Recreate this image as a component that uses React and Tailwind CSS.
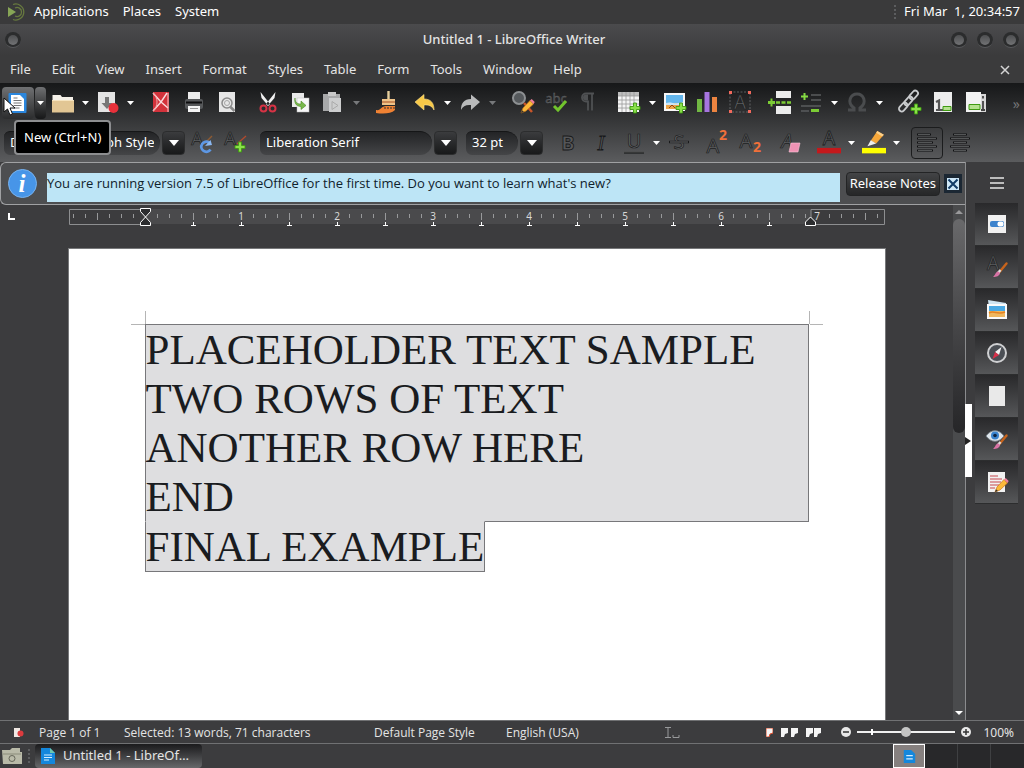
import { useState } from "react";

const lines = [
  "PLACEHOLDER TEXT SAMPLE",
  "TWO ROWS OF TEXT",
  "ANOTHER ROW HERE",
  "END",
];
const lastLine = "FINAL EXAMPLE";

const Svg = ({ size = 22, children }) => (
  <svg width={size} height={size} viewBox="0 0 22 22" fill="none" className="flex-none overflow-visible" aria-hidden="true">
    {children}
  </svg>
);

const Plus = ({ x = 12, y = 12 }) => (
  <path
    d={`M${x + 3.5} ${y}h3v3.5h3.5v3h-3.5v3.5h-3v-3.5h-3.5v-3h3.5z`}
    fill="#8be04a"
    stroke="#3f9a12"
    strokeWidth="0.9"
  />
);

const Letter = ({ x = 11, y = 18, size = 20, italic, children }) => (
  <text
    x={x}
    y={y}
    textAnchor="middle"
    fontFamily="Noto Sans"
    fontSize={size}
    fontStyle={italic ? "italic" : "normal"}
    fill="#626466"
    stroke="#1c1d1e"
    strokeWidth="0.7"
  >
    {children}
  </text>
);

const Pencil = () => (
  <>
    <path d="M9 21l2-5 7-7.500 3.500 3.500-7.500 7z" fill="#fbb93a" stroke="#c9741a" strokeWidth="0.7" />
    <path d="M18 8.500l1.700-1.500 3 3-1.200 2z" fill="#ef7f9c" />
    <path d="M9 21l1-2.800 2 1.800z" fill="#333" />
  </>
);

const Brush = () => (
  <>
    <path d="M20.500 7.500l-7 8.500" stroke="#c8641c" strokeWidth="2.400" strokeLinecap="round" />
    <path d="M14.500 14l-2.500 3" stroke="#ddd" strokeWidth="2.600" />
    <path d="M12.500 15.500c-3 0-3 3.500-5.500 5.500 3.500 0 6.500-1 7-4z" fill="#d873a5" />
  </>
);

const icons = {
  doc: (
    <Svg>
      <rect x="1.500" y="1" width="18" height="20" rx="1" fill="#2b86dc" />
      <path d="M4 3h9l4 4v12h-13z" fill="#fff" />
      <path d="M6.500 6h4M6.500 8.500h8M6.500 11h8M6.500 13.500h8M6.500 16h6" stroke="#777" />
    </Svg>
  ),
  folder: (
    <Svg>
      <path d="M0.500 3h8l1.500 2h11v15h-20.500z" fill="#f5f1e9" />
      <path d="M0 8h22v12.500h-22z" fill="#e2c694" />
      <path d="M0 8.500h22" stroke="#f6e4bf" />
    </Svg>
  ),
  save: (
    <Svg>
      <path d="M1 0h17v20h-17z" fill="#e4e4e4" />
      <path d="M8 5h4v6h3.500l-5.500 6-5.500-6h3.500z" fill="#777" />
      <circle cx="16.500" cy="16" r="5" fill="#e8303a" />
    </Svg>
  ),
  pdf: (
    <Svg>
      <rect x="3" y="0" width="16" height="20" fill="#d3323b" />
      <path d="M3 1l8 9-8 9M11 10l6-9M11 10l7 6" stroke="#f9dcdd" strokeWidth="1.400" />
      <path d="M3 1c3 3 4 6 4 9s-1 6-4 9" stroke="#f0a3a6" />
      <path d="M18 1v19" stroke="#f4c7c9" />
    </Svg>
  ),
  print: (
    <Svg>
      <path d="M5 0h12v9h-12z" fill="#ececec" />
      <rect x="2" y="7" width="18" height="10" rx="2" fill="#56585a" />
      <path d="M3 10.500h16" stroke="#0d0d0e" strokeWidth="2" />
      <path d="M5 14h12v6h-12z" fill="#f4f4f4" />
      <path d="M7 16.500h8" stroke="#999" />
    </Svg>
  ),
  preview: (
    <Svg>
      <path d="M3 0h16v20h-16z" fill="#e6e6e6" />
      <circle cx="11" cy="11" r="5" stroke="#8b8b8b" strokeWidth="1.500" />
      <circle cx="11" cy="11" r="2.500" stroke="#a5a5a5" />
      <path d="M14.500 15l4 4" stroke="#888" strokeWidth="2.500" />
    </Svg>
  ),
  cut: (
    <Svg>
      <path d="M3.500 0l1 6 7 8 1.500-2zM18.500 0l-1 6-7 8-1.500-2z" fill="#f0f0f0" />
      <ellipse cx="6.500" cy="16.500" rx="3" ry="3" stroke="#d63345" strokeWidth="2" />
      <ellipse cx="15.500" cy="16.500" rx="3" ry="3" stroke="#d63345" strokeWidth="2" />
    </Svg>
  ),
  copy: (
    <Svg>
      <rect x="2" y="1" width="12" height="14" fill="#e9e9e9" />
      <rect x="7" y="6" width="12" height="14" fill="#f7f7f7" stroke="#bbb" strokeWidth="0.500" />
      <path d="M5 6c0 4 2 6 6 6v-3l5 4.500-5 4v-3c-5 0-7-4-6-8.500z" fill="#78b84a" stroke="#4b8a24" strokeWidth="0.600" />
    </Svg>
  ),
  paste: (
    <Svg>
      <path d="M0 2h17v17h-17z" fill="#a8a9aa" />
      <rect x="5" y="0" width="8" height="4" fill="#c9c9c9" />
      <path d="M6 6h12v14h-12z" fill="#cdcecf" />
      <path d="M9 9.500l6 4-6 4z" stroke="#aaa" />
    </Svg>
  ),
  clone: (
    <Svg>
      <path d="M12.500 -1v8" stroke="#e7cf9d" strokeWidth="2.400" />
      <path d="M6 7h13v6h-13z" fill="#f0c489" />
      <path d="M6 10h13" stroke="#a94f20" />
      <path d="M0 18c5 1 5-4 10-4h9v4c-4 4-12 4-19 3z" fill="#f08233" />
      <path d="M9 15v2M12 15v2M15 15v2M18 15v2" stroke="#333" />
    </Svg>
  ),
  undo: (
    <Svg>
      <path d="M1 10l9-7.500v4.500c7 0 10 4 10 11-2-4-5-5.500-10-5v5z" fill="#f8c948" stroke="#fbe08b" strokeWidth="0.600" />
    </Svg>
  ),
  redo: (
    <Svg>
      <path d="M21 10l-9-7.500v4.500c-7 0-10 4-10 11 2-4 5-5.500 10-5v5z" fill="#b9babb" />
    </Svg>
  ),
  find: (
    <Svg>
      <circle cx="7" cy="6" r="6" fill="#55595c" stroke="#8d9092" strokeWidth="2" />
      <path d="M12 11l8 9" stroke="#c9562a" strokeWidth="2.500" />
      <Pencil />
    </Svg>
  ),
  spell: (
    <Svg>
      <text x="11" y="11" textAnchor="middle" fontFamily="Noto Sans" fontSize="13" fill="#46484a" stroke="#6b6d6f" strokeWidth="0.300">abc</text>
      <path d="M9 14l4 4 8-9" stroke="#72c42d" strokeWidth="3" />
    </Svg>
  ),
  pilcrow: (
    <Svg>
      <path d="M16 1.500h-8a4 4 0 0 0 0 8h2v9M14 1.500v17" stroke="#4f5153" strokeWidth="1.800" />
      <path d="M10 2.500h-2a3 3 0 0 0 0 6h2z" fill="#4f5153" />
    </Svg>
  ),
  table: (
    <Svg>
      <path d="M-1 0h21v20h-21z" fill="#f4f4f4" />
      <path d="M-1 0h21v4h-21z" fill="#bdbdbd" />
      <path d="M-1 4h21M-1 8h21M-1 12h21M-1 16h21M3 0v20M7 0v20M11 0v20M15 0v20" stroke="#999" strokeWidth="0.800" />
      <Plus x={11} y={11} />
    </Svg>
  ),
  image: (
    <Svg>
      <path d="M0 1h21v18h-21z" fill="#f8f8f8" />
      <path d="M2 3h17v8h-17z" fill="#63b6ec" />
      <path d="M2 11h17v6h-17z" fill="#eda448" />
      <path d="M2 11c5-2 9 2 17-1v3h-17z" fill="#cbe6f6" />
      <path d="M5 16l3-3 3 3" stroke="#8d4514" />
      <Plus y={11} />
    </Svg>
  ),
  chart: (
    <Svg>
      <path d="M0 7h5v13h-5z" fill="#71b743" />
      <path d="M7.500 0h5v20h-5z" fill="#a675df" />
      <path d="M15 5h5v15h-5z" fill="#ed8440" />
    </Svg>
  ),
  textbox: (
    <Svg>
      <rect x="0" y="0" width="20" height="20" stroke="#77797b" strokeWidth="0.700" strokeDasharray="2 1.500" />
      <Letter x={10} y={17} size={19}>A</Letter>
      <path d="M-1 -1h3v3h-3zM18 -1h3v3h-3zM-1 18h3v3h-3zM18 18h3v3h-3z" fill="#f2695c" />
    </Svg>
  ),
  pageBreak: (
    <Svg>
      <path d="M8 -1h15v7h-15zM8 14h15v8h-15z" fill="#ececec" />
      <path d="M8 10.500h15" stroke="#7ccc35" strokeWidth="2.500" strokeDasharray="4 1.500" />
      <path d="M0 9h2.500v-2.500h2v2.500h2.500v3h-2.500v2.500h-2v-2.500h-2.500z" fill="#7ccc35" />
    </Svg>
  ),
  field: (
    <Svg>
      <path d="M10 3h10M10 8h10M0 14h20M0 19h8" stroke="#5a5c5e" strokeWidth="1.400" />
      <path d="M2.500 1h2v2.500h2.500v2h-2.500v2.500h-2v-2.500h-2.500v-2h2.500z" fill="#85db43" />
      <path d="M10 17h8v3h-8z" fill="#7ccc35" />
    </Svg>
  ),
  omega: (
    <Svg>
      <path d="M2 18h6v-2c-8-6-3-14 3-14s11 8 3 14v2h6" stroke="#4a4c4e" strokeWidth="3" />
    </Svg>
  ),
  link: (
    <Svg>
      <g stroke="#c9cbcd" strokeWidth="1.800">
        <rect x="12" y="-2" width="5.500" height="10" rx="2.700" transform="rotate(42 14.700 3)" />
        <rect x="7" y="4" width="5" height="10" rx="2.500" transform="rotate(42 9.500 9)" />
        <rect x="1.500" y="10" width="5.500" height="10" rx="2.700" transform="rotate(42 4.200 15)" />
      </g>
      <Plus x={12} y={12} />
    </Svg>
  ),
  footnote: (
    <Svg>
      <path d="M2 0h18v20h-18z" fill="#ededed" />
      <path d="M4 10l3-1.500v9.500M4 18h7" stroke="#555" strokeWidth="2.200" />
      <path d="M11 14.500h8v4h-8z" fill="#b5e28e" stroke="#3f9a12" />
    </Svg>
  ),
  endnote: (
    <Svg>
      <path d="M4 2h17v18h-17z" fill="#d8d8d8" />
      <path d="M1 0h15v20h-15z" fill="#f2f2f2" />
      <path d="M4 12.500h11v5h-11z" fill="#b5e28e" stroke="#3f9a12" />
      <path d="M18 4v2.500M18 9v9M16 18h4" stroke="#444" strokeWidth="1.800" />
    </Svg>
  ),
  updateStyle: (
    <Svg>
      <Letter x={6} y={13} size={18}>A</Letter>
      <path d="M13 12l8-8" stroke="#8d5a32" strokeWidth="1.400" />
      <path d="M18 10.500a5 5 0 1 0 1.500 7" stroke="#5d97e4" strokeWidth="2.800" />
      <path d="M14 14l7-1-1.500-5z" fill="#8ab8f2" />
    </Svg>
  ),
  newStyle: (
    <Svg>
      <Letter x={6} y={13} size={18}>A</Letter>
      <path d="M13 12l9-8" stroke="#b34a2c" strokeWidth="1.400" />
      <Plus x={11} y={10} />
    </Svg>
  ),
  bold: (
    <Svg>
      <text x="11" y="18" textAnchor="middle" fontFamily="Noto Sans" fontWeight="700" fontSize="20" fill="#555658" stroke="#18191a" strokeWidth="0.800">B</text>
    </Svg>
  ),
  italic: (
    <Svg>
      <text x="11" y="18" textAnchor="middle" fontFamily="Liberation Serif" fontStyle="italic" fontSize="21" fill="#555658" stroke="#18191a" strokeWidth="0.800">I</text>
    </Svg>
  ),
  underline: (
    <Svg>
      <Letter y={16}>U</Letter>
      <path d="M1 20.500h20" stroke="#0f1011" strokeWidth="2" />
      <path d="M1 20h20" stroke="#999" strokeWidth="0.600" />
    </Svg>
  ),
  strike: (
    <Svg>
      <Letter y={17}>S</Letter>
      <path d="M1 10h20" stroke="#18191a" strokeWidth="2.400" />
      <path d="M2 10h18" stroke="#66686a" />
    </Svg>
  ),
  superscript: (
    <Svg>
      <Letter x={7} y={21} size={20}>A</Letter>
      <text x="17" y="8" textAnchor="middle" fontFamily="Noto Sans" fontWeight="700" fontSize="14" fill="#f0703a">2</text>
    </Svg>
  ),
  subscript: (
    <Svg>
      <Letter x={7} y={16} size={20}>A</Letter>
      <text x="18" y="20" textAnchor="middle" fontFamily="Noto Sans" fontWeight="700" fontSize="14" fill="#f0703a">2</text>
    </Svg>
  ),
  clear: (
    <Svg>
      <Letter x={7} y={16} italic>A</Letter>
      <path d="M11 11h9l-2 9h-9z" fill="#ef93b4" stroke="#f9c3d6" strokeWidth="0.600" />
    </Svg>
  ),
  fontColor: (
    <Svg size={24}>
      <Letter y={13} size={18}>A</Letter>
      <path d="M0 15.500h22v5h-22z" fill="#c4191c" />
    </Svg>
  ),
  highlight: (
    <Svg size={24}>
      <path d="M8 9l6-9 6 3.500-7 8z" fill="#f6a73a" />
      <path d="M14 0l6 3.500-1.500 1.500-5.500-3.500z" fill="#fbd08b" />
      <path d="M5 14l3-5.500 5 3z" fill="#eee" />
      <path d="M0 15.500h22v5h-22z" fill="#ffff00" />
    </Svg>
  ),
  alignLeft: (
    <Svg>
      <path d="M1 2.500h14M1 6.500h20M1 10.500h16M1 14.500h20M1 18.500h16" stroke="#101112" strokeWidth="2" />
      <path d="M2 2.500h12M2 6.500h18M2 10.500h14M2 14.500h18M2 18.500h14" stroke="#66686a" strokeWidth="0.800" />
    </Svg>
  ),
  alignCenter: (
    <Svg>
      <path d="M4 2.500h14M1 6.500h20M4 10.500h14M1 14.500h20M4 18.500h14" stroke="#101112" strokeWidth="2" />
      <path d="M5 2.500h12M2 6.500h18M5 10.500h12M2 14.500h18M5 18.500h12" stroke="#66686a" strokeWidth="0.800" />
    </Svg>
  ),
  properties: (
    <Svg>
      <path d="M2 2h18v18h-18z" fill="#f1f1f1" />
      <rect x="4" y="8" width="14" height="6" rx="2" fill="#3c83cd" />
      <rect x="11.500" y="8.500" width="6" height="5" rx="2" fill="#fff" />
    </Svg>
  ),
  styles: (
    <Svg>
      <Letter x={7} y={14} size={19}>A</Letter>
      <Brush />
    </Svg>
  ),
  gallery: (
    <Svg>
      <path d="M2 1l18 3v5h-17z" fill="#cfe4f1" />
      <path d="M1 5h20v15h-20z" fill="#fafafa" />
      <path d="M3 7h16v5h-16z" fill="#4aa9e3" />
      <path d="M3 12h16v6h-16z" fill="#f0b75e" />
      <path d="M3 14c5-3 8 2 16-1" stroke="#e58221" strokeWidth="1.500" />
    </Svg>
  ),
  navigator: (
    <Svg>
      <circle cx="11" cy="11" r="9" fill="#4b4f55" stroke="#cfd0d2" strokeWidth="2" />
      <path d="M15.500 5l-2.500 8-4-3z" fill="#f3f3f3" />
      <path d="M6.500 17l2.500-7 4 3z" fill="#d92f49" />
    </Svg>
  ),
  page: (
    <Svg>
      <path d="M3 1h16v20h-16z" fill="#e9e9e9" />
    </Svg>
  ),
  inspector: (
    <Svg>
      <path d="M0 8c5-7 13-7 18 0-5 7-13 7-18 0z" fill="#dfe6ec" stroke="#79838b" />
      <circle cx="9" cy="7.500" r="4" fill="#3b84cf" />
      <circle cx="9" cy="7.500" r="1.800" fill="#0e2440" />
      <Brush />
    </Svg>
  ),
  changes: (
    <Svg>
      <path d="M2 1h17v20h-17z" fill="#f2f2f2" />
      <path d="M4 5h8M4 8h12M4 11h11M4 14h9M4 17h5" stroke="#c5474d" strokeWidth="1.200" />
      <Pencil />
    </Svg>
  ),
};

const Caret = ({ dim }) => (
  <svg width="7" height="4" viewBox="0 0 7 4" aria-hidden="true">
    <path d="M0 0h7l-3.500 4z" fill={dim ? "#77797b" : "#fff"} />
  </svg>
);

const toolbar = [
  ["doc", "New", "caret"], ["folder", "Open", "caret"], ["save", "Save", "caret"], "sep",
  ["pdf", "Export as PDF"], ["print", "Print"], ["preview", "Print Preview"], "sep",
  ["cut", "Cut"], ["copy", "Copy"], ["paste", "Paste", "dim"], "sep",
  ["clone", "Clone Formatting"], "thin",
  ["undo", "Undo", "caret"], ["redo", "Redo", "dim"], "sep",
  ["find", "Find and Replace"], ["spell", "Spelling"], ["pilcrow", "Formatting Marks"], "sep",
  ["table", "Insert Table", "caret"], ["image", "Insert Image"], ["chart", "Insert Chart"], ["textbox", "Insert Text Box"], "thin",
  ["pageBreak", "Page Break"], ["field", "Insert Field", "caret"], ["omega", "Special Character", "caret"], "sep",
  ["link", "Hyperlink"], ["footnote", "Footnote"], ["endnote", "Endnote"],
];

const formatting = [
  ["bold", "Bold"], ["italic", "Italic"], ["underline", "Underline", "caret"], ["strike", "Strikethrough"], "thin",
  ["superscript", "Superscript"], ["subscript", "Subscript"], "sep",
  ["clear", "Clear Formatting"], "thin",
  ["fontColor", "Font Color", "caret"], ["highlight", "Highlighting", "caret"], "sep",
  ["alignLeft", "Align Left"], ["alignCenter", "Align Center"],
];

const sidebar = [
  ["properties", "Properties"], ["styles", "Styles"], ["gallery", "Gallery"], ["navigator", "Navigator"],
  ["page", "Page"], ["inspector", "Style Inspector"], ["changes", "Manage Changes"],
];

const Tools = ({ items }) =>
  items.map((item, i) => {
    if (item === "sep") return <div key={i} className="w-[7px] flex-none" />;
    if (item === "thin") return <div key={i} className="w-1 flex-none" />;
    const [name, label, drop] = item;
    const hot = name === "doc";
    return (
      <div key={i} className="flex flex-none gap-px">
        <button
          aria-label={label}
          className={`flex h-8 w-8 items-center justify-center rounded-sm ${
            hot ? "bg-linear-to-b from-[#707173] to-[#2c2d2e]" : ""
          } ${name === "alignLeft" ? "border border-[#1b1c1d]" : ""}`}
        >
          {icons[name]}
        </button>
        {drop && (
          <button
            aria-label={`${label} options`}
            className={`flex h-8 w-[11px] items-center justify-center rounded-sm ${
              hot ? "bg-linear-to-b from-[#707173] to-[#161718]" : ""
            }`}
          >
            <Caret dim={drop === "dim"} />
          </button>
        )}
      </div>
    );
  });

const Combo = ({ label, value, className }) => {
  const [text, setText] = useState(value);
  return (
    <div className={`flex h-6 flex-none gap-0.5 ${className}`}>
      <input
        aria-label={label}
        value={text}
        onChange={(e) => setText(e.target.value)}
        className="min-w-0 flex-1 rounded-l-md rounded-r-xl border-t border-[#151617] bg-linear-to-b from-[#232426] to-[#444547] px-1.5 text-[13px] text-white outline-none"
      />
      <button
        aria-label={`${label} list`}
        className="flex w-[23px] flex-none items-center justify-center rounded-sm border border-[#2c2d2e] bg-linear-to-b from-[#3b3c3e] to-[#18191a]"
      >
        <svg width="10" height="6" viewBox="0 0 10 6" aria-hidden="true">
          <path d="M0 0h10l-5 6z" fill="#fff" />
        </svg>
      </button>
    </div>
  );
};

const Ruler = () => {
  const ticks = [];
  for (let x = 4; x < 814; x += 12) ticks.push(x);
  const stops = [];
  for (let x = 124; x < 740; x += 48) stops.push(x);
  return (
    <svg width="816" height="20" viewBox="0 0 816 20" className="block" aria-hidden="true">
      <rect x="76" y="1" width="666" height="15" fill="#4a4a4c" />
      <path d="M76 1.500h-75.500v15h75.500M742 1.500h73.500v15h-73.500z" stroke="#8d8e90" fill="none" />
      {ticks.map((x) => {
        const n = (x - 76) / 96;
        if (n > 0 && n < 7 && Number.isInteger(n)) {
          return (
            <text key={x} x={x} y="12" textAnchor="middle" fontFamily="Noto Sans" fontSize="10" fill="#d8d8d8">{n}</text>
          );
        }
        if (n === 7) return null;
        const tall = (x - 28) % 48 === 0;
        return <path key={x} d={tall ? `M${x + 0.5} 5v7` : `M${x + 0.5} 6v4`} stroke="#98999b" />;
      })}
      <text x="748" y="12" textAnchor="middle" fontFamily="Noto Sans" fontSize="10" fill="#d8d8d8">7</text>
      {stops.map((x) => (
        <path key={x} d={`M${x - 2} 17.500h5M${x + 0.5} 14v3`} stroke="#fff" />
      ))}
      <path d="M71.500 0.500h10v3l-5 5.500 5 5.500v3h-10v-3l5-5.500-5-5.500z" fill="#2c2d2f" stroke="#fff" />
      <path d="M736.500 17.500v-3.500l5-5 5 5v3.500z" fill="#2c2d2f" stroke="#fff" />
    </svg>
  );
};

const Orb = () => (
  <button
    aria-label="Window control"
    className="flex h-4 w-4 items-center justify-center rounded-full border-b border-[#58595b] bg-[#2b2c2d]"
  >
    <span className="h-2.5 w-2.5 rounded-full bg-linear-to-b from-[#4e4f51] to-[#727375]" />
  </button>
);

const PageIcon = ({ hot }) => (
  <svg width="7" height="9" viewBox="0 0 7 9" aria-hidden="true">
    <path d="M0 0h7v5l-3 1-1 3h-3z" fill="#f5f5f5" stroke={hot ? "#e0502f" : "none"} />
  </svg>
);

const WriterIcon = () => (
  <svg width="14" height="16" viewBox="0 0 14 16" aria-hidden="true">
    <path d="M0 0h9l5 5v11h-14z" fill="#1487dc" />
    <path d="M9 0l5 5h-5z" fill="#6cc9b0" />
    <path d="M3 7h8M3 9.500h8M3 12h5" stroke="#d5eeff" />
  </svg>
);

export default function App() {
  const [zoom, setZoom] = useState(50);

  return (
    <div className="flex h-screen w-full flex-col overflow-hidden bg-[#3c3c3e] font-['Noto_Sans',sans-serif] text-[13px] text-[#e4e4e4]">
      {/* desktop panel */}
      <header className="flex h-6 flex-none items-center justify-between bg-[#3a3a3b] pr-1 pl-2 text-white">
        <nav className="flex items-center gap-3.5">
          <button className="flex items-center gap-2">
            <svg width="18" height="18" viewBox="0 0 18 18" fill="none" aria-hidden="true">
              <path d="M0 4l8 5-8 5z" fill="#87a556" />
              <path d="M5 1.500a8 8 0 1 1 0 15M7 5a4.500 4.500 0 1 1 0 8" stroke="#67793f" strokeWidth="1.300" />
            </svg>
            Applications
          </button>
          <button>Places</button>
          <button>System</button>
        </nav>
        <div className="flex items-center gap-2">
          <span className="h-3.5 border-l-2 border-dotted border-[#5c5d5f]" />
          <time className="whitespace-pre">Fri Mar  1, 20:34:57</time>
        </div>
      </header>

      {/* title bar */}
      <div className="flex h-8 flex-none items-center justify-between bg-linear-to-b from-[#4b4b4d] to-[#3b3b3c] px-[5px]">
        <Orb />
        <h1 className="pl-14 font-medium">Untitled 1 - LibreOffice Writer</h1>
        <div className="flex gap-2.5">
          <Orb />
          <Orb />
          <Orb />
        </div>
      </div>

      <nav className="flex h-[27px] flex-none items-center gap-[21px] bg-[#3b3b3c] pr-3.5 pl-2.5">
        {["File", "Edit", "View", "Insert", "Format", "Styles", "Table", "Form", "Tools", "Window", "Help"].map((m) => (
          <button key={m}>{m}</button>
        ))}
        <button aria-label="Close document" className="ml-auto">
          <svg width="10" height="10" viewBox="0 0 10 10" aria-hidden="true">
            <path d="M1 1l8 8M9 1l-8 8" stroke="#d5d5d5" strokeWidth="1.500" />
          </svg>
        </button>
      </nav>

      <div className="relative flex-none bg-linear-to-b from-[#171819] to-[#5b5c5e]">
        <div className="flex h-10 items-center gap-px pl-0.5">
          <Tools items={toolbar} />
          <span className="mr-1 ml-auto text-[14px] text-[#737476]">»</span>
        </div>
        <div className="flex h-[39px] items-center gap-px pl-1">
          <Combo label="Paragraph Style" value="Default Paragraph Style" className="w-[181px]" />
          <Tools items={[["updateStyle", "Update Style"], ["newStyle", "New Style"]]} />
          <Combo label="Font Name" value="Liberation Serif" className="ml-2 w-[197px]" />
          <Combo label="Font Size" value="32 pt" className="mr-2 ml-2 w-[77px]" />
          <Tools items={formatting} />
        </div>

        <div role="tooltip" className="absolute top-[37px] left-3.5 flex h-[35px] items-center rounded-sm border-2 border-[#8d8e90] bg-black px-2 text-white">
          New (Ctrl+N)
        </div>
        <svg width="13" height="20" viewBox="0 0 13 20" className="absolute top-3.5 left-[3px]" aria-hidden="true">
          <path d="M1 1v14l3.500-3 2.500 6 2.500-1-2.500-6h5z" fill="#fff" stroke="#111" />
        </svg>
      </div>

      <div className="flex min-h-0 flex-1">
        <div className="relative flex min-w-0 flex-1 flex-col border-r border-[#8b8c8e]">
          <div className="flex h-[43px] flex-none items-center rounded-l-md border-y border-l border-[#a0a1a3] bg-[#4d4e50] pr-[3px] pl-[7px]">
            <svg width="29" height="29" viewBox="0 0 29 29" className="flex-none" aria-hidden="true">
              <circle cx="14.500" cy="14.500" r="14" fill="#4795e8" stroke="#79b3ef" />
              <text x="14" y="23" textAnchor="middle" fontFamily="Liberation Serif" fontStyle="italic" fontWeight="700" fontSize="25" fill="#fff">i</text>
            </svg>
            <p className="mt-2 ml-2.5 h-[29px] flex-1 bg-[#bde5f6] font-['Open_Sans',sans-serif] text-[13px] leading-5 whitespace-nowrap text-[#10222c]">
              You are running version 7.5 of LibreOffice for the first time. Do you want to learn what's new?
            </p>
            <button className="ml-1.5 h-6 rounded-sm border border-[#232425] bg-linear-to-b from-[#434446] to-[#262728] px-[3px] text-white">
              Release Notes
            </button>
            <button aria-label="Close message" className="ml-1 flex h-[19px] w-[18px] items-center justify-center bg-[#1b2733]">
              <svg width="12" height="12" viewBox="0 0 12 12" aria-hidden="true">
                <path d="M0 0h12v12h-12z" fill="#cfe8f8" />
                <path d="M1.500 1.500l9 9M10.500 1.500l-9 9" stroke="#123b66" strokeWidth="2" />
              </svg>
            </button>
          </div>

          <div className="flex min-h-0 flex-1">
            <div className="relative flex min-w-0 flex-1 flex-col items-center overflow-hidden">
              <svg width="8" height="8" viewBox="0 0 8 8" className="absolute top-2 left-2" aria-hidden="true">
                <path d="M1 0v6h6" stroke="#fff" strokeWidth="2" fill="none" />
              </svg>
              <div className="flex-none pt-[3px] pb-5">
                <Ruler />
              </div>
              <main className="min-h-0 w-[818px] flex-1 border border-b-0 border-[#77787a] bg-white px-[76px] pt-[76px]">
                <article className="relative font-['Liberation_Serif',serif] text-[43px] leading-[49px] text-[#1a1c1f]">
                  <svg width="692" height="14" viewBox="0 0 692 14" className="absolute -top-3.5 -left-3.5" aria-hidden="true">
                    <path d="M0 13.500h14M14.500 0v13M678.500 0v13M679 13.500h13" stroke="#b5b5b5" />
                  </svg>
                  <div className="border border-t-0 border-[#77777a] bg-[#dedee0] shadow-[0_-1px_0_#77777a]">
                    {lines.map((line) => (
                      <p key={line}>{line}</p>
                    ))}
                  </div>
                  <p className="relative -mt-px w-fit border border-[#77777a] border-t-[#dedee0] bg-[#dedee0]">{lastLine}</p>
                </article>
              </main>
            </div>

            <div className="flex w-3 flex-none flex-col items-center justify-between bg-[#4a4b4d]">
              <button aria-label="Scroll up" className="flex h-3.5 flex-none items-center">
                <svg width="8" height="4" viewBox="0 0 8 4" aria-hidden="true"><path d="M0 4h8l-4-4z" fill="#99999b" /></svg>
              </button>
              <div className="flex w-full flex-1 flex-col">
                <div className="h-[44%] rounded-lg bg-linear-to-b from-[#69696b] to-[#262628]" />
              </div>
              <button aria-label="Scroll down" className="flex h-3.5 flex-none items-center">
                <svg width="8" height="4" viewBox="0 0 8 4" aria-hidden="true"><path d="M0 0h8l-4 4z" fill="#fff" /></svg>
              </button>
            </div>
          </div>

          <button aria-label="Collapse sidebar" className="absolute top-[242px] -right-[7px] z-10 flex h-[73px] w-[7px] items-center bg-white">
            <svg width="6" height="8" viewBox="0 0 6 8" aria-hidden="true"><path d="M0 0l6 4-6 4z" fill="#222" /></svg>
          </button>
        </div>

        <aside className="flex w-[58px] flex-none flex-col items-center pl-[3px]">
          <button aria-label="Sidebar settings" className="flex h-[41px] w-full flex-none items-center justify-center">
            <svg width="14" height="12" viewBox="0 0 14 12" aria-hidden="true">
              <path d="M0 1h14M0 6h14M0 11h14" stroke="#e6e6e6" strokeWidth="1.500" />
            </svg>
          </button>
          {sidebar.map(([name, label]) => (
            <button
              key={name}
              aria-label={label}
              className="flex h-[43px] w-[43px] flex-none items-center justify-center border-b border-[#2c2d2e] bg-linear-to-b from-[#29292b] to-[#565759]"
            >
              {icons[name]}
            </button>
          ))}
        </aside>
      </div>

      <footer className="flex h-6 flex-none items-center border-y border-[#707173] pr-2.5 pl-3.5 text-[12px]">
        <svg width="10" height="9" viewBox="0 0 10 9" className="mr-[15px]" aria-hidden="true">
          <path d="M0 0h6v9h-6z" fill="#f0e8e4" />
          <circle cx="6.500" cy="5.500" r="3" fill="#dc3b3e" />
        </svg>
        <div className="flex pt-0.5 font-['Open_Sans',sans-serif]">
          <span className="w-[85px]">Page 1 of 1</span>
          <span className="w-[250px]">Selected: 13 words, 71 characters</span>
          <span className="w-[132px]">Default Page Style</span>
          <span>English (USA)</span>
        </div>
        <div className="ml-auto flex items-center">
          <svg width="15" height="11" viewBox="0 0 15 11" className="mr-[86px]" aria-hidden="true">
            <path d="M0 0.500h6M3 0v10M0 10.500h6M8 8v2.500h6v-2.500" stroke="#98999b" fill="none" />
          </svg>
          <PageIcon hot />
          <span className="ml-2 flex gap-[3px]"><PageIcon /><PageIcon /></span>
          <span className="ml-2 flex gap-px"><PageIcon /><PageIcon /></span>
          <button aria-label="Zoom out" className="ml-5">
            <svg width="10" height="10" viewBox="0 0 10 10" aria-hidden="true">
              <circle cx="5" cy="5" r="5" fill="#e8e8e8" /><path d="M2 5h6" stroke="#333" strokeWidth="1.500" />
            </svg>
          </button>
          <div className="relative mx-[6px] flex w-[98px] items-center">
            <input
              type="range"
              aria-label="Zoom"
              value={zoom}
              onChange={(e) => setZoom(e.target.value)}
              className="h-2.5 w-full appearance-none bg-[linear-gradient(#f0f0f0,#f0f0f0)] bg-[length:100%_2px] bg-center bg-no-repeat [&::-webkit-slider-thumb]:h-2.5 [&::-webkit-slider-thumb]:w-2.5 [&::-webkit-slider-thumb]:appearance-none [&::-webkit-slider-thumb]:rounded-full [&::-webkit-slider-thumb]:bg-[#c4c4c4]"
            />
            <span className="absolute left-3.5 h-1.5 w-0.5 bg-white" />
          </div>
          <button aria-label="Zoom in">
            <svg width="10" height="10" viewBox="0 0 10 10" aria-hidden="true">
              <circle cx="5" cy="5" r="5" fill="#e8e8e8" /><path d="M2 5h6M5 2v6" stroke="#333" strokeWidth="1.500" />
            </svg>
          </button>
          <span className="ml-3 pt-0.5">100%</span>
        </div>
      </footer>

      {/* task bar */}
      <div className="flex h-6 flex-none items-center pl-0.5">
        <button aria-label="Show desktop">
          <svg width="20" height="18" viewBox="0 0 20 18" aria-hidden="true">
            <path d="M0 3h8l2-2h8v4h2v12h-19z" fill="#b9baa8" />
            <path d="M1 7h18" stroke="#8b8c7b" />
            <circle cx="10" cy="11.500" r="3" stroke="#66675a" fill="none" />
          </svg>
        </button>
        <span className="ml-1.5 h-3.5 border-l-2 border-dotted border-[#5c5d5f]" />
        <button className="ml-[5px] flex h-6 w-[167px] items-center gap-2 rounded-sm bg-linear-to-b from-[#1b1b1d] to-[#68696b] px-1.5">
          <WriterIcon />
          Untitled 1 - LibreOf…
        </button>
        <div className="ml-auto flex h-6 w-[131px]">
          <button aria-label="Workspace 1" className="flex w-8 items-center justify-center border border-white bg-[#86807f]">
            <svg width="13" height="13" viewBox="0 0 14 16" aria-hidden="true">
              <path d="M0 0h9l5 5v11h-14z" fill="#1487dc" />
              <path d="M3 7h8M3 11h8" stroke="#d5eeff" strokeWidth="1.500" />
            </svg>
          </button>
          <button aria-label="Workspace 2" className="w-[33px] border-r border-[#3f4042] bg-[#28282a]" />
          <button aria-label="Workspace 3" className="w-[33px] border-r border-[#3f4042] bg-[#28282a]" />
          <button aria-label="Workspace 4" className="w-[33px] bg-[#28282a]" />
        </div>
      </div>
    </div>
  );
}
